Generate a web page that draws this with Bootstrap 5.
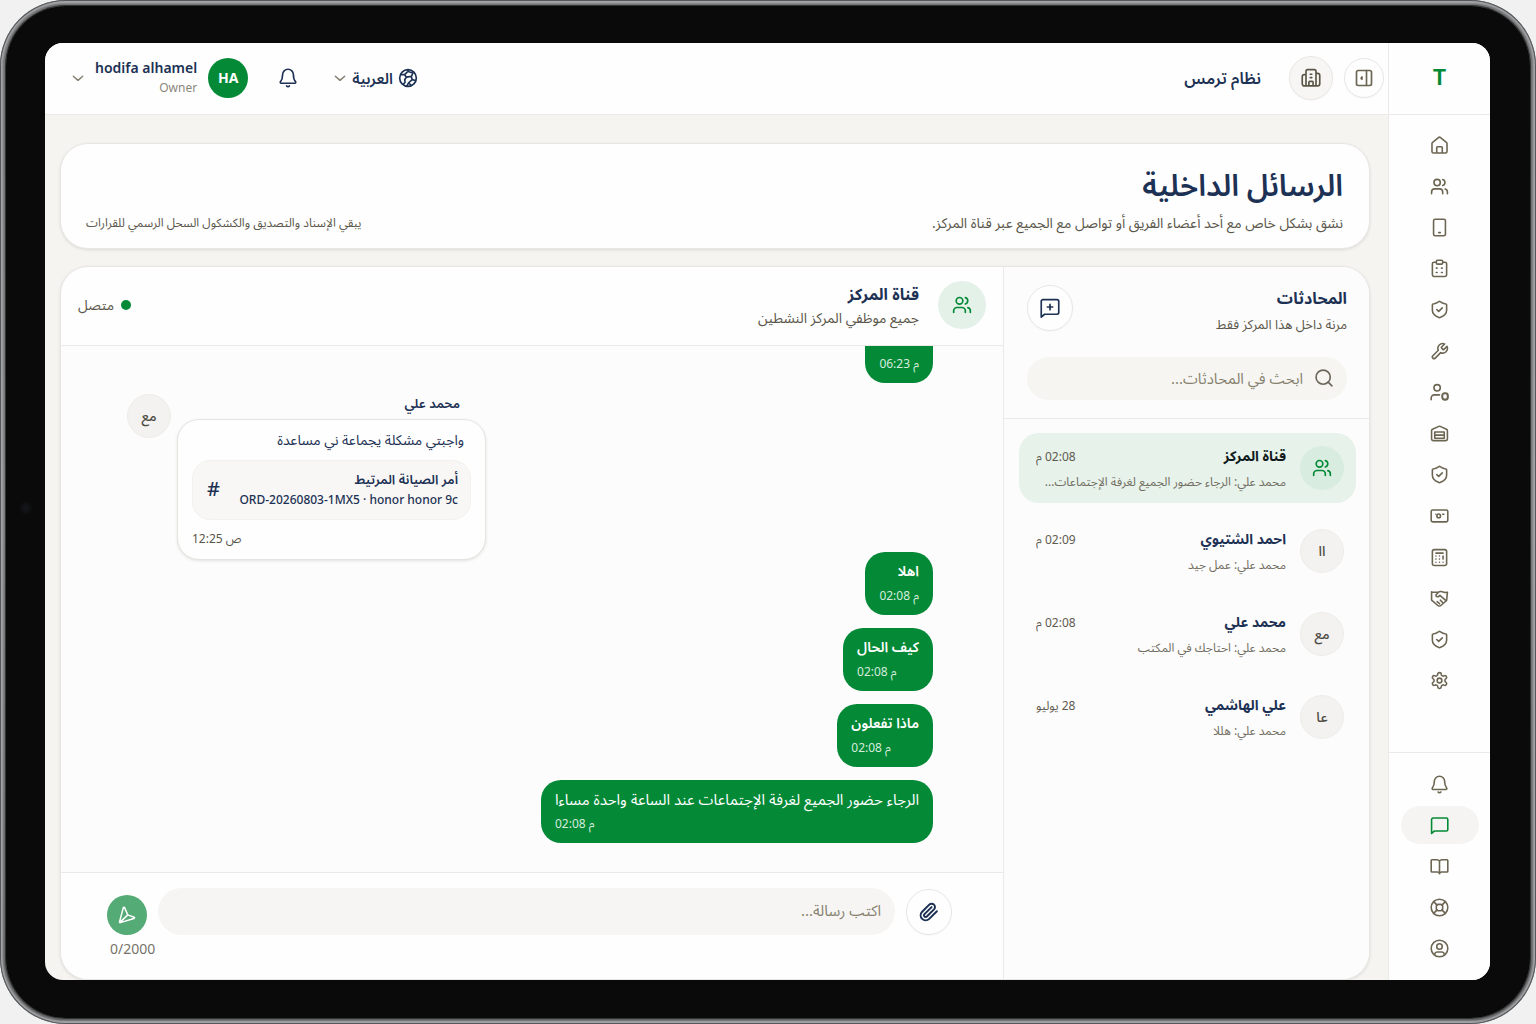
<!DOCTYPE html>
<html lang="ar" dir="rtl">
<head>
<meta charset="utf-8">
<meta name="viewport" content="width=device-width, initial-scale=1">
<title>الرسائل الداخلية</title>
<link rel="stylesheet" href="https://cdn.jsdelivr.net/npm/bootstrap@5.3.0/dist/css/bootstrap.min.css">
<style>
:root{--navy:#1c3154;--green:#048937;--muted-ink:#5a564a;--line:#eceae8;--soft:#f5f4f1}
body{font-family:"Noto Sans","Noto Sans Arabic",sans-serif;background:#f1f1f1;color:var(--navy);font-size:14px;line-height:20px}
a{color:inherit;text-decoration:none}
.ico{width:20px;height:20px;fill:none;stroke:currentColor;stroke-width:2;stroke-linecap:round;stroke-linejoin:round;flex:none}
.tablet{height:100vh;border-radius:66px;padding:6px;background:linear-gradient(180deg,#55565a 0,#909193 2px,#6a6b6d 5px,#7b7c7e 50%,#5d5e60 calc(100% - 4px),#a3a4a6 100%);box-shadow:inset 0 0 0 1px #55575a,inset 0 0 2px 3px #a5a6a8}
.bezel{height:100%;background:radial-gradient(circle at 20px 502px,#15171b 0,#101113 4px,#0a0a0a 7px);border-radius:60px;padding:37px 40px 38px 39px;box-shadow:0 0 0 1px #333}
.screen{height:100%;border-radius:18px;overflow:hidden;background:var(--soft)}
.rail{width:102px;background:#fefefe;border-left:1px solid var(--line);color:#6c6552;flex:none}
.brand{height:72px;border-bottom:1px solid var(--line);color:var(--green);font-size:21px;font-weight:700;font-family:Inter,sans-serif;padding-bottom:2px}
.rail-main{padding:11px 0 52px;flex:1 1 0;min-height:0}
.rail-foot{border-top:1px solid var(--line);padding:12px 0 13px;gap:3px}
.rail-link{width:78px;height:38px;border-radius:19px;display:flex;align-items:center;justify-content:center}
.rail-link.on{background:#f5f4f2;color:var(--green)}
.rail .ico{width:19px;height:19px}
.topbar{height:72px;background:#fefefe;border-bottom:1px solid var(--line);padding:0 4px 2px 26px;flex:none}
.round-btn{border-radius:50%;border:1px solid #e9e7e4;background:#fefefe;color:var(--navy);display:flex;align-items:center;justify-content:center;padding:0;flex:none;box-shadow:0 1px 2px rgba(0,0,0,.03);width:46px;height:46px}
.panel-btn{width:40px;height:40px;color:#6c6552}
.org-mark{width:44px;height:44px;background:#f7f6f4;color:#5c5646;margin-right:11px}
.plain-btn{border:0;background:none;padding:0;color:var(--navy)}
.org{font-size:16px;font-weight:600;margin-right:28px}
.lang{font-size:15px;font-weight:600;line-height:24px;gap:5px}
.bell-btn{margin:0 35px 0 30px}
.user-txt{margin:0 11px 0 10px;text-align:right}
.user-name{font-size:14px;font-weight:600;line-height:20px}
.user-role{font-size:12px;line-height:19px;color:#8b877c}
.face{border-radius:50%;background:#f3f2f0;border:1px solid #eeedea;color:#4e4b43;display:flex;align-items:center;justify-content:center;flex:none;width:44px;height:44px;font-size:14px;font-weight:500}
.face.me{background:var(--green);border:0;color:#fff;font-weight:700;width:40px;height:40px}
.face.team{background:#d8ecdf;border:0;color:var(--green)}
.face.big{width:48px;height:48px;background:#e4f1e9}
.caret{width:14px;height:14px;color:#85806f}
.main-pad{padding:28px 18px 0 15px;gap:17px;min-height:0}
.panel-box{background:#fefefe;border:1px solid #e8e6e3;border-radius:28px;box-shadow:0 1px 3px rgba(60,55,40,.13)}
.hero{padding:21px 26px 14px 25px}
.hero h1{font-size:30px;line-height:40px;font-weight:600;margin:0 0 7px}
.sub{color:var(--muted-ink);font-size:14px;line-height:22px;margin:0}
.hero-note{font-size:12px}
.chatbox{overflow:hidden;min-height:0}
.convs{width:366px;border-left:1px solid var(--line);background:#fcfcfc;flex:none}
.convs-top{padding:18px 22px 18px 23px;border-bottom:1px solid var(--line);gap:22px}
.convs-sub{font-size:13px;margin-top:2px}
.h-sec{font-size:16px;line-height:26px;font-weight:700;margin:0}
.search{background:#f6f5f2;border-radius:22px;height:43px;padding:0 13px 2px;gap:11px;color:#6c685c}
.bare{border:0;background:none;outline:0;min-width:0;height:100%;line-height:30px;flex:1;padding:0;color:var(--navy);font-size:15px}
.bare::placeholder{color:#87826f;opacity:1}
.conv-list{padding:14px 13px 14px 15px;gap:13px}
.conv{height:70px;border-radius:20px;padding:0 12px 0 17px;gap:14px;display:flex;align-items:center}
.conv.on{background:#e6f2ea}
.conv.on .conv-name{color:#101a1c}
.conv-name{font-size:14px;font-weight:700;line-height:24px}
.conv-text{font-size:12px;line-height:22px;margin-top:2px;color:#716d61}
.conv-time{font-size:12px;color:#5f5b50;line-height:25px}
.chat-top{height:79px;border-bottom:1px solid var(--line);padding:0 17px 3px;gap:19px;flex:none}
.online{color:var(--muted-ink);gap:7px}
.dot{width:10px;height:10px;border-radius:50%;background:var(--green)}
.feed{background:#fcfcfc;overflow:hidden;padding:0 70px 29px 66px;min-height:0}
.bub{background:var(--green);color:#fff;border-radius:20px;padding:8px 14px 11px;align-self:flex-start;margin-top:13px;flex:none}
.bub p{margin:0 0 6px;font-size:14px;line-height:22px;font-weight:600;min-height:22px}
.bub .long-text{font-size:15px;font-weight:400}
.bub time{display:block;font-size:12px;line-height:16px;color:#d5ecdd;text-align:left}
.incoming{margin:11px 0 -21px;gap:6px;flex:none}
.in-name{font-size:13px;font-weight:600;line-height:18px;padding-right:26px;margin-bottom:7px}
.in-card{background:#fefefe;border:1px solid #e6e4e1;border-radius:22px;padding:9px 14px;box-shadow:0 1px 3px rgba(60,55,40,.13);width:309px;height:141px}
.in-card p{margin:0 7px 9px 0;font-size:14px;line-height:22px}
.order{background:#f8f7f5;border:1px solid #f2f1ee;border-radius:18px;height:60px;padding:0 12px 2px 14px;font-weight:500}
.order-t{font-size:13px;font-weight:600;line-height:20px}
.order-n{font-size:12px;line-height:21px}
.hash{font-size:20px;font-weight:500}
.in-card time{display:block;font-size:12px;line-height:18px;color:var(--muted-ink);text-align:left;margin-top:10px}
.composer{background:#fefefe;border-top:1px solid var(--line);padding:15px 51px 20px 46px;flex:none}
.comp-row{gap:11px}
.field{background:#f6f5f3;border-radius:24px;height:47px;padding:0 14px 4px;flex:1}
.send{width:40px;height:40px;border-radius:50%;border:0;background:#55ab76;color:#fff;padding:0;display:flex;align-items:center;justify-content:center}
.send .ico{width:18px;height:18px}
.count{line-height:20px;color:#77736a;padding-left:3px;margin-top:4px}
</style>
<script src="https://cdn.jsdelivr.net/npm/bootstrap@5.3.0/dist/js/bootstrap.bundle.min.js"></script>
</head>
<body>
<svg class="d-none" aria-hidden="true">
<symbol id="home" viewBox="0 0 24 24"><path d="M15.500 21.500v-7a1 1 0 0 0-1-1h-5a1 1 0 0 0-1 1v7M2.500 9.500a2 2 0 0 1 .8-1.500l7.400-6a2 2 0 0 1 2.600 0l7.400 6a2 2 0 0 1 .8 1.500v10a2 2 0 0 1-2 2h-15a2 2 0 0 1-2-2z"/></symbol>
<symbol id="users" viewBox="0 0 24 24"><path d="M16 21v-2a4 4 0 0 0-4-4H6a4 4 0 0 0-4 4v2M16 3.100a4 4 0 0 1 0 7.700M22 21v-2a4 4 0 0 0-3-3.900"/><circle cx="9" cy="7" r="4"/></symbol>
<symbol id="device" viewBox="0 0 24 24"><rect x="4.500" y="1.500" width="15" height="21" rx="2"/><path d="M11 18.500h2"/></symbol>
<symbol id="clip" viewBox="0 0 24 24"><rect x="8" y="1.500" width="8" height="5" rx="1.500"/><path d="M16 4h3a2 2 0 0 1 2 2v14a2 2 0 0 1-2 2H5a2 2 0 0 1-2-2V6a2 2 0 0 1 2-2h3M8 11.500h1M14.500 11.500h1M8 17h1M14.500 17h1"/></symbol>
<symbol id="shield" viewBox="0 0 24 24"><path d="M21 13c0 5-4 7.500-8.300 9.200a2 2 0 0 1-1.400 0C7 20.500 3 18 3 13V6a1 1 0 0 1 1-1c2.500 0 5-1.200 7.200-2.900a1.200 1.200 0 0 1 1.600 0C15 3.800 17.500 5 20 5a1 1 0 0 1 1 1zM8.500 12l2.500 2.300 4.500-4.300"/></symbol>
<symbol id="wrench" viewBox="0 0 24 24"><path d="M14.700 6.300a1 1 0 0 0 0 1.400l1.600 1.600a1 1 0 0 0 1.400 0l3.770-3.770a6 6 0 0 1-7.940 7.940l-6.910 6.910a2.120 2.120 0 0 1-3-3l6.910-6.910a6 6 0 0 1 7.940-7.940l-3.760 3.760z"/></symbol>
<symbol id="usercog" viewBox="0 0 24 24"><circle cx="9" cy="6" r="4"/><path d="M1.500 21v-2a4 4 0 0 1 4-4H12"/><rect x="15.500" y="13" width="7" height="8" rx="3" stroke-width="2.600"/></symbol>
<symbol id="store" viewBox="0 0 24 24"><path d="M2 8.500a2 2 0 0 1 1.200-1.800l8-3.700a2 2 0 0 1 1.600 0l8 3.700A2 2 0 0 1 22 8.500V19a2 2 0 0 1-2 2H4a2 2 0 0 1-2-2zM6 10h12v8H6zM6 14h12"/></symbol>
<symbol id="cash" viewBox="0 0 24 24"><rect x="1.500" y="5" width="21" height="15" rx="2"/><circle cx="11" cy="12.500" r="2.300"/><path d="M7.500 10.500h.01M16 10.500h1.500"/></symbol>
<symbol id="calc" viewBox="0 0 24 24"><rect x="3" y="2" width="18" height="20" rx="2.500"/><path d="M7.500 6.500h9M7.500 10v.01M7.500 14v.01M7.500 18v.01M12 10v.01M12 14v.01M12 18v.01M16.500 10v4M16.500 18v.01"/></symbol>
<symbol id="hands" viewBox="0 0 24 24"><path d="M3 4h8M2 3.500V14l7.500 6.500a3 3 0 0 0 4.500 0l7-6 1-10.500-3 .500-5-1.300a5 5 0 0 0-4 1.500L7.500 7.500c0 2.500 2.500 3 4 1.500l1-1 8 7M9 16l3 2.500M13 14l3 3"/></symbol>
<symbol id="gear" viewBox="0 0 24 24"><path d="M12.220 2h-.440a2 2 0 0 0-2 2v.180a2 2 0 0 1-1 1.730l-.430.250a2 2 0 0 1-2 0l-.150-.080a2 2 0 0 0-2.730.730l-.220.380a2 2 0 0 0 .730 2.730l.150.100a2 2 0 0 1 1 1.720v.510a2 2 0 0 1-1 1.740l-.150.090a2 2 0 0 0-.730 2.730l.220.380a2 2 0 0 0 2.730.730l.150-.080a2 2 0 0 1 2 0l.430.250a2 2 0 0 1 1 1.730V20a2 2 0 0 0 2 2h.440a2 2 0 0 0 2-2v-.180a2 2 0 0 1 1-1.730l.430-.250a2 2 0 0 1 2 0l.150.080a2 2 0 0 0 2.730-.730l.220-.390a2 2 0 0 0-.730-2.730l-.150-.080a2 2 0 0 1-1-1.740v-.500a2 2 0 0 1 1-1.740l.150-.090a2 2 0 0 0 .730-2.730l-.220-.380a2 2 0 0 0-2.730-.730l-.150.080a2 2 0 0 1-2 0l-.430-.250a2 2 0 0 1-1-1.730V4a2 2 0 0 0-2-2z"/><circle cx="12" cy="12" r="3"/></symbol>
<symbol id="bell" viewBox="0 0 24 24"><path d="M10.300 21.500a2 2 0 0 0 3.400 0M3 16.300c-.6.800-.2 2 .8 2h16.400c1 0 1.400-1.200.8-2-1.700-1.800-2.500-3.800-2.500-8.300a6.500 6.500 0 0 0-13 0c0 4.500-.8 6.500-2.500 8.300z"/></symbol>
<symbol id="msg" viewBox="0 0 24 24"><path d="M22.500 17a2 2 0 0 1-2 2H5.500L2 22V4.500a2 2 0 0 1 2-2h16.500a2 2 0 0 1 2 2z"/></symbol>
<symbol id="msgplus" viewBox="0 0 24 24"><path d="M22.500 17.500a2 2 0 0 1-2 2H5.500L1.500 23V4a2 2 0 0 1 2-2h17a2 2 0 0 1 2 2zM12 7.500v6.500M8.800 10.800h6.400"/></symbol>
<symbol id="book" viewBox="0 0 24 24"><path d="M12 5v16M2.500 19a1 1 0 0 1-1-1V4.500a1 1 0 0 1 1-1H8A4 4 0 0 1 12 5a4 4 0 0 1 4-1.500h5.500a1 1 0 0 1 1 1V18a1 1 0 0 1-1 1H15a3 3 0 0 0-3 2 3 3 0 0 0-3-2z"/></symbol>
<symbol id="buoy" viewBox="0 0 24 24"><circle cx="12" cy="12" r="10.500"/><rect x="8" y="8" width="8" height="8" rx="2.500"/><path d="M4.600 4.600 9 9M15 9l4.400-4.400M15 15l4.400 4.400M9 15l-4.400 4.400"/></symbol>
<symbol id="person" viewBox="0 0 24 24"><circle cx="12" cy="12" r="10.500"/><circle cx="12" cy="9.500" r="3.500"/><path d="M6 20v-1a3 3 0 0 1 3-2.500h6a3 3 0 0 1 3 2.500v1"/></symbol>
<symbol id="panel" viewBox="0 0 24 24"><rect x="3" y="3" width="18" height="18" rx="2"/><path d="M15 3v18M9.500 10.500 8.500 12.500 9.500 13.500z"/></symbol>
<symbol id="building" viewBox="0 0 24 24"><path d="M6 21.500V4a2 2 0 0 1 2-2h8a2 2 0 0 1 2 2v17.500M6 8H4a2.500 2.500 0 0 0-2.500 2.500V19A2.500 2.500 0 0 0 4 21.500h16a2.500 2.500 0 0 0 2.500-2.500V9A2.500 2.500 0 0 0 20 6.500h-2M9.500 21v-4a1 1 0 0 1 1-1h3a1 1 0 0 1 1 1v4M11 7.500h2M11 11.500h2"/></symbol>
<symbol id="globe" viewBox="0 0 24 24"><circle cx="12" cy="12" r="10"/><path d="M3.500 8 8 8l2 3-2 3 .500 3-2 2.500M10 11l6-1 2-4-5-1.500-1.500-2M8 8l3-3M16 10l1 4 4 1M10.500 22l2-4 4.500-4M13 18l3 3"/></symbol>
<symbol id="down" viewBox="0 0 24 24"><path stroke-width="2.500" d="m4 9 8 7 8-7"/></symbol>
<symbol id="find" viewBox="0 0 24 24"><circle cx="11" cy="11" r="8.500"/><path d="m21.500 21.500-4.500-4.500"/></symbol>
<symbol id="attach" viewBox="0 0 24 24"><path stroke-width="2.400" d="m21.440 11.050-9.190 9.190a6 6 0 0 1-8.490-8.490l8.570-8.570A4 4 0 1 1 18 8.840l-8.590 8.570a2 2 0 0 1-2.830-2.830l8.490-8.480"/></symbol>
<symbol id="plane" viewBox="0 0 24 24"><path d="M8.800 2.200a1 1 0 0 0-1.700.1L2 21.200a.8.800 0 0 0 1 1l18.300-5.500a.9.900 0 0 0 .2-1.700L13 11.800zM13 11.800 3 21.500"/></symbol>
</svg>

<div class="tablet"><div class="bezel"><div class="screen d-flex">

<aside class="rail d-flex flex-column">
  <a href="#" class="brand d-flex align-items-center justify-content-center">T</a>
  <nav class="rail-main d-flex flex-column align-items-center justify-content-between" aria-label="القائمة">
    <a class="rail-link" href="#"><svg class="ico"><use href="#home"/></svg></a>
    <a class="rail-link" href="#"><svg class="ico"><use href="#users"/></svg></a>
    <a class="rail-link" href="#"><svg class="ico"><use href="#device"/></svg></a>
    <a class="rail-link" href="#"><svg class="ico"><use href="#clip"/></svg></a>
    <a class="rail-link" href="#"><svg class="ico"><use href="#shield"/></svg></a>
    <a class="rail-link" href="#"><svg class="ico"><use href="#wrench"/></svg></a>
    <a class="rail-link" href="#"><svg class="ico"><use href="#usercog"/></svg></a>
    <a class="rail-link" href="#"><svg class="ico"><use href="#store"/></svg></a>
    <a class="rail-link" href="#"><svg class="ico"><use href="#shield"/></svg></a>
    <a class="rail-link" href="#"><svg class="ico"><use href="#cash"/></svg></a>
    <a class="rail-link" href="#"><svg class="ico"><use href="#calc"/></svg></a>
    <a class="rail-link" href="#"><svg class="ico"><use href="#hands"/></svg></a>
    <a class="rail-link" href="#"><svg class="ico"><use href="#shield"/></svg></a>
    <a class="rail-link" href="#"><svg class="ico"><use href="#gear"/></svg></a>
  </nav>
  <nav class="rail-foot d-flex flex-column align-items-center" aria-label="روابط">
    <a class="rail-link" href="#"><svg class="ico"><use href="#bell"/></svg></a>
    <a class="rail-link on" href="#"><svg class="ico"><use href="#msg"/></svg></a>
    <a class="rail-link" href="#"><svg class="ico"><use href="#book"/></svg></a>
    <a class="rail-link" href="#"><svg class="ico"><use href="#buoy"/></svg></a>
    <a class="rail-link" href="#"><svg class="ico"><use href="#person"/></svg></a>
  </nav>
</aside>

<div class="d-flex flex-column flex-grow-1 overflow-hidden">
  <header class="topbar d-flex align-items-center">
    <button type="button" class="round-btn panel-btn"><svg class="ico"><use href="#panel"/></svg></button>
    <span class="round-btn org-mark"><svg class="ico"><use href="#building"/></svg></span>
    <span class="org">نظام ترمس</span>
    <div class="d-flex align-items-center me-auto">
      <button type="button" class="plain-btn lang d-flex align-items-center"><svg class="ico"><use href="#globe"/></svg>العربية<svg class="ico caret"><use href="#down"/></svg></button>
      <button type="button" class="plain-btn bell-btn"><svg class="ico"><use href="#bell"/></svg></button>
      <button type="button" class="plain-btn d-flex align-items-center">
        <span class="face me">HA</span>
        <span class="user-txt" dir="ltr"><span class="user-name d-block">hodifa alhamel</span><span class="user-role d-block">Owner</span></span>
        <svg class="ico caret"><use href="#down"/></svg>
      </button>
    </div>
  </header>

  <main class="main-pad d-flex flex-column flex-grow-1">
    <section class="panel-box hero">
      <h1>الرسائل الداخلية</h1>
      <div class="d-flex justify-content-between">
        <p class="sub">نشق بشكل خاص مع أحد أعضاء الفريق أو تواصل مع الجميع عبر قناة المركز.</p>
        <p class="sub hero-note">يبقي الإسناد والتصديق والكشكول السحل الرسمي للقرارات</p>
      </div>
    </section>

    <section class="panel-box chatbox d-flex flex-grow-1">
      <div class="convs d-flex flex-column">
        <div class="convs-top d-flex flex-column">
          <div class="d-flex justify-content-between align-items-start">
            <div><h2 class="h-sec">المحادثات</h2><p class="sub convs-sub">مرنة داخل هذا المركز فقط</p></div>
            <button type="button" class="round-btn"><svg class="ico"><use href="#msgplus"/></svg></button>
          </div>
          <div class="search d-flex align-items-center">
            <label for="q" class="d-flex"><svg class="ico"><use href="#find"/></svg></label>
            <input id="q" class="bare" type="text" placeholder="ابحث في المحادثات...">
          </div>
        </div>
        <div class="conv-list d-flex flex-column">
          <a href="#" class="conv on"><span class="face team"><svg class="ico"><use href="#users"/></svg></span>
            <span class="flex-grow-1 overflow-hidden"><span class="d-flex justify-content-between"><span class="conv-name">قناة المركز</span><span class="conv-time">02:08 م</span></span><span class="conv-text d-block text-nowrap">محمد علي: الرجاء حضور الجميع لغرفة الإجتماعات...</span></span></a>
          <a href="#" class="conv"><span class="face">اا</span>
            <span class="flex-grow-1 overflow-hidden"><span class="d-flex justify-content-between"><span class="conv-name">احمد الشتيوي</span><span class="conv-time">02:09 م</span></span><span class="conv-text d-block text-nowrap">محمد علي: عمل جيد</span></span></a>
          <a href="#" class="conv"><span class="face">مع</span>
            <span class="flex-grow-1 overflow-hidden"><span class="d-flex justify-content-between"><span class="conv-name">محمد علي</span><span class="conv-time">02:08 م</span></span><span class="conv-text d-block text-nowrap">محمد علي: احتاجك في المكتب</span></span></a>
          <a href="#" class="conv"><span class="face">عا</span>
            <span class="flex-grow-1 overflow-hidden"><span class="d-flex justify-content-between"><span class="conv-name">علي الهاشمي</span><span class="conv-time">28 يوليو</span></span><span class="conv-text d-block text-nowrap">محمد علي: هللا</span></span></a>
        </div>
      </div>

      <div class="d-flex flex-column flex-grow-1 overflow-hidden">
        <div class="chat-top d-flex align-items-center">
          <span class="face team big"><svg class="ico"><use href="#users"/></svg></span>
          <div><h2 class="h-sec">قناة المركز</h2><p class="sub">جميع موظفي المركز النشطين</p></div>
          <div class="online d-flex align-items-center me-auto"><span class="dot"></span>متصل</div>
        </div>
        <div class="feed d-flex flex-column justify-content-end flex-grow-1">
          <div class="bub"><p></p><time dir="ltr">06:23 م</time></div>
          <div class="incoming d-flex flex-row-reverse align-self-end">
            <span class="face">مع</span>
            <div><div class="in-name">محمد علي</div>
              <div class="in-card">
                <p>واجبتي مشكلة يجماعة ني مساعدة</p>
                <div class="order d-flex align-items-center justify-content-between">
                  <div><div class="order-t">أمر الصيانة المرتيط</div><div class="order-n" dir="ltr">ORD-20260803-1MX5 · honor honor 9c</div></div>
                  <span class="hash">#</span>
                </div>
                <time dir="ltr">12:25 ص</time>
              </div></div>
          </div>
          <div class="bub"><p>اهلا</p><time dir="ltr">02:08 م</time></div>
          <div class="bub"><p>كيف الحال</p><time dir="ltr">02:08 م</time></div>
          <div class="bub"><p>ماذا تفعلون</p><time dir="ltr">02:08 م</time></div>
          <div class="bub"><p class="long-text">الرجاء حضور الجميع لغرفة الإجتماعات عند الساعة واحدة مساءا</p><time dir="ltr">02:08 م</time></div>
        </div>
        <form class="composer">
          <div class="d-flex align-items-end comp-row">
            <button type="button" class="round-btn"><svg class="ico"><use href="#attach"/></svg></button>
            <label for="m" class="field d-flex align-items-center"><input id="m" class="bare" type="text" aria-label="رسالة" placeholder="اكتب رسالة..."></label>
            <button type="button" class="send"><svg class="ico"><use href="#plane"/></svg></button>
          </div>
          <div class="count" dir="ltr">0/2000</div>
        </form>
      </div>
    </section>
  </main>
</div>
</div></div></div>
</body>
</html>
